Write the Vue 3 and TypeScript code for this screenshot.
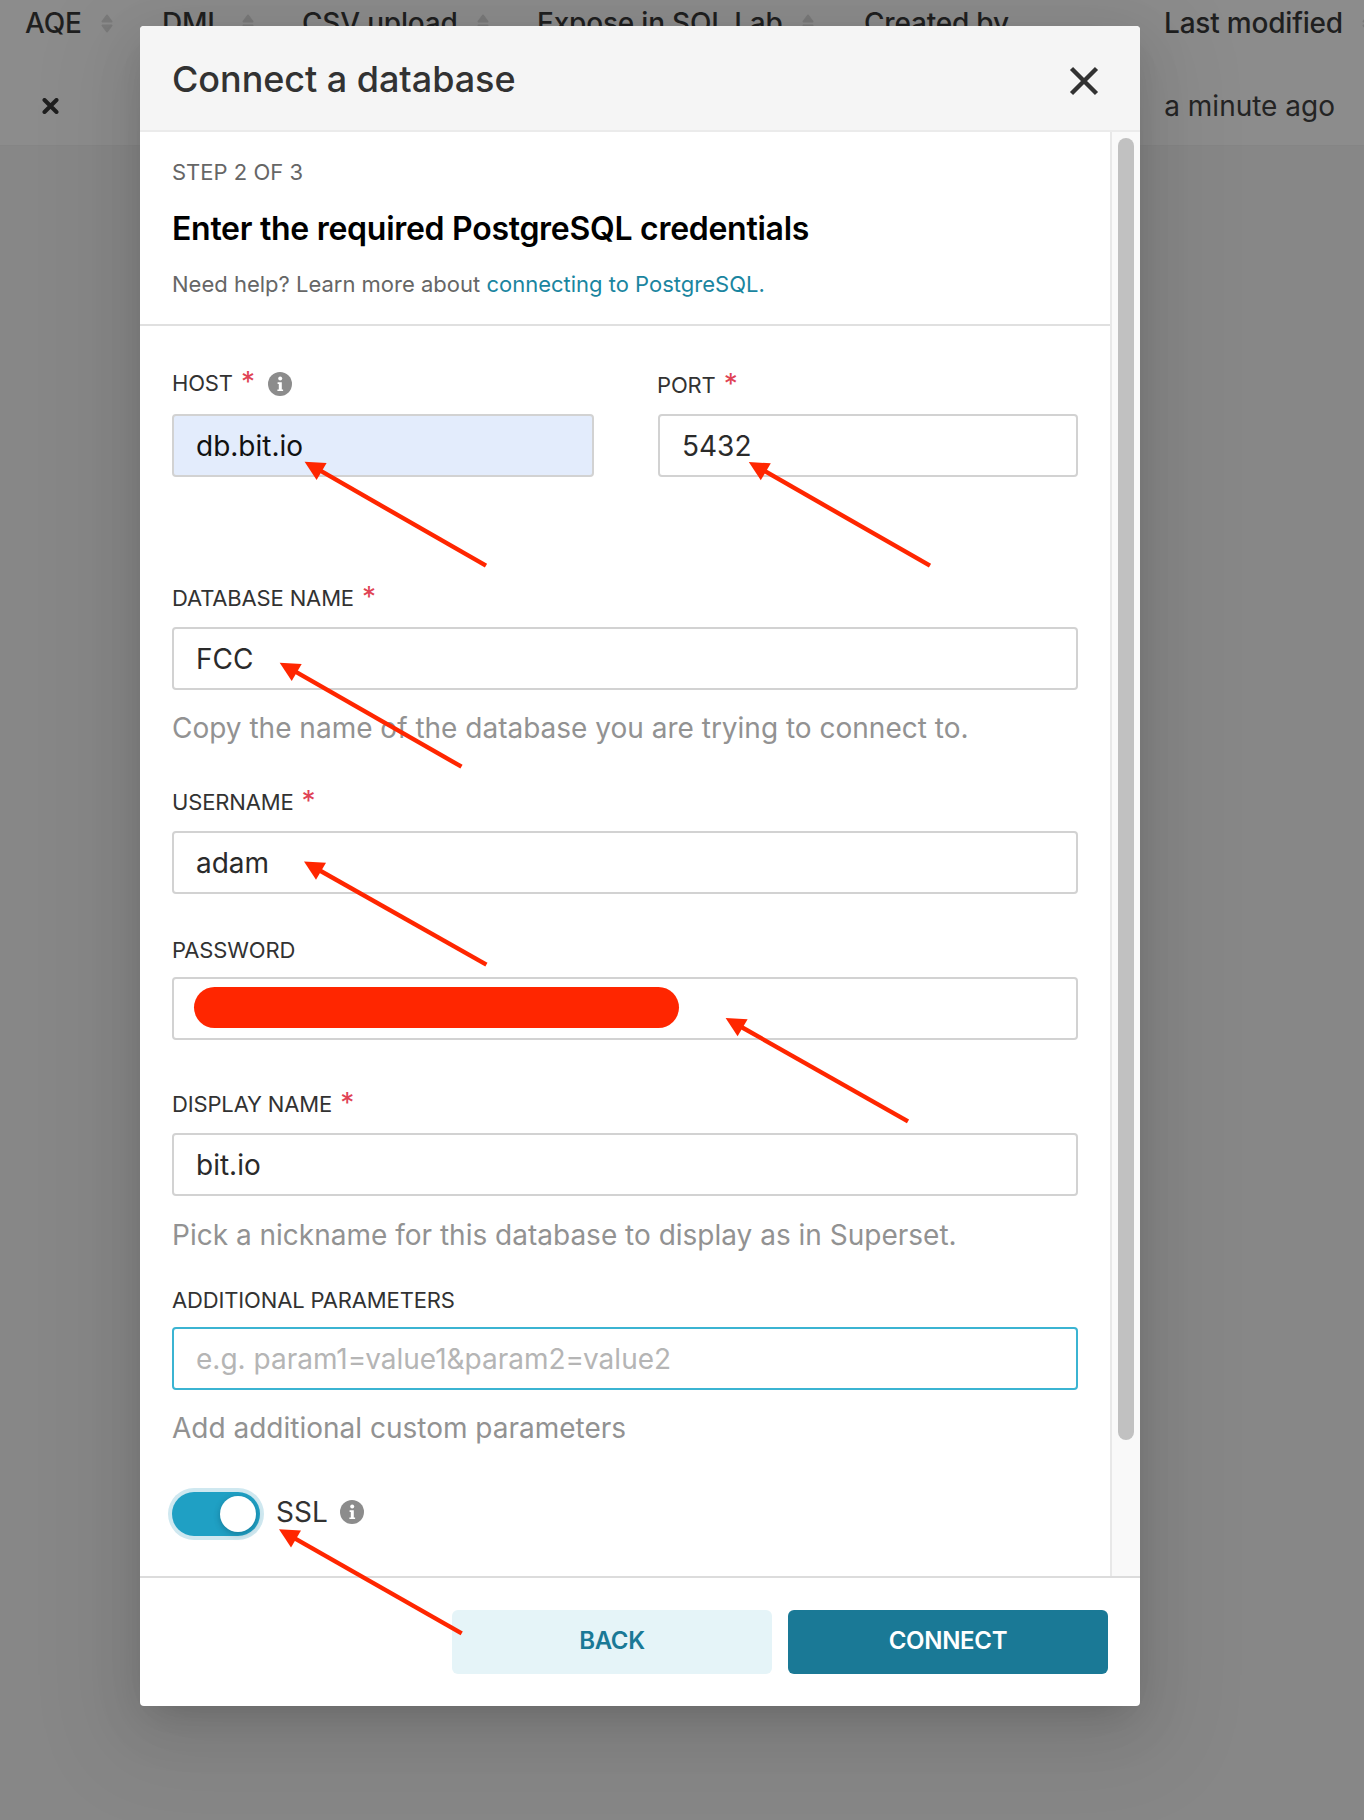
<script setup lang="ts">
interface Arrow { tx: number; ty: number; ex: number; ey: number }
const columns = [
  { name: 'AQE', width: 137, sort: true },
  { name: 'DML', width: 140, sort: true },
  { name: 'CSV upload', width: 235, sort: true },
  { name: 'Expose in SQL Lab', width: 327, sort: true },
  { name: 'Created by', width: 300, sort: false },
  { name: 'Last modified', width: 200, sort: true },
]
const arrows: Arrow[] = [
  { tx: 304.6, ty: 461.7, ex: 486, ey: 565.7 },
  { tx: 748.8, ty: 462, ex: 930, ey: 565.7 },
  { tx: 279.7, ty: 662.7, ex: 461.5, ey: 766.7 },
  { tx: 304, ty: 861.5, ex: 486.4, ey: 964.7 },
  { tx: 725.6, ty: 1018, ex: 908, ey: 1121.4 },
  { tx: 279, ty: 1529.3, ex: 461.7, ey: 1633.3 },
]
const head = (a: Arrow) =>
  `${a.tx},${a.ty} ${a.tx + 22},${a.ty + 1.3} ${a.tx + 12},${a.ty + 18.3}`
</script>

<template>
  <div class="page">
    <div class="table-head">
      <div v-for="c in columns" :key="c.name" class="th" :style="{ width: c.width + 'px' }">
        <span>{{ c.name }}</span>
        <svg v-if="c.sort" class="sort" width="12" height="19" viewBox="0 0 12 19">
          <path d="M6 1.5 L10.5 7.5 H1.5 Z" fill="#7a7a7a" stroke="#7a7a7a" stroke-width="2" stroke-linejoin="round" />
          <path d="M6 17.5 L10.5 11.5 H1.5 Z" fill="#7a7a7a" stroke="#7a7a7a" stroke-width="2" stroke-linejoin="round" />
        </svg>
      </div>
    </div>
    <div class="table-row">
      <svg class="row-x" width="17" height="16" viewBox="0 0 17 16">
        <path d="M2.5 2 L14.5 14 M14.5 2 L2.5 14" stroke="#1f1f1f" stroke-width="4" stroke-linecap="round" fill="none" />
      </svg>
      <span class="row-time">a minute ago</span>
    </div>

    <section class="modal">
      <header class="modal-head">
        <h1>Connect a database</h1>
        <svg class="close" width="30" height="30" viewBox="0 0 30 30">
          <path d="M2.5 2.5 L27.5 27.5 M27.5 2.5 L2.5 27.5" stroke="#323232" stroke-width="4.4" fill="none" />
        </svg>
      </header>
      <div class="modal-main">
        <div class="content">
          <div class="intro">
            <div class="step">STEP 2 OF 3</div>
            <h2>Enter the required PostgreSQL credentials</h2>
            <p class="help">Need help? Learn more about <a>connecting to PostgreSQL.</a></p>
          </div>
          <div class="form">
            <div class="host-row">
              <div class="col-host">
                <label class="lab lab-host">HOST<i>*</i>
                  <svg class="info" width="24" height="24" viewBox="0 0 24 24">
                    <circle cx="12" cy="12" r="12" fill="#8c8c8c" />
                    <circle cx="12.2" cy="6.6" r="2" fill="#fff" />
                    <path d="M9.6 10.2h4.2v7.2h1.3v1.7H9.4v-1.7h1.4v-5.5H9.6z" fill="#fff" />
                  </svg>
                </label>
                <input class="inp autofill" readonly value="db.bit.io" />
              </div>
              <div class="col-port">
                <label class="lab lab-host port-lab">PORT<i>*</i></label>
                <input class="inp" readonly value="5432" />
              </div>
            </div>

            <div class="field f-db">
              <label class="lab">DATABASE NAME<i>*</i></label>
              <input class="inp" readonly value="FCC" />
              <p class="hint">Copy the name of the database you are trying to connect to.</p>
            </div>
            <div class="field f-user">
              <label class="lab">USERNAME<i>*</i></label>
              <input class="inp" readonly value="adam" />
            </div>
            <div class="field f-pass">
              <label class="lab lab-tight">PASSWORD</label>
              <div class="pass-wrap">
                <input class="inp" readonly value="" />
                <span class="redact"></span>
              </div>
            </div>
            <div class="field f-name">
              <label class="lab">DISPLAY NAME<i>*</i></label>
              <input class="inp" readonly value="bit.io" />
              <p class="hint hint-name">Pick a nickname for this database to display as in Superset.</p>
            </div>
            <div class="field f-extra">
              <label class="lab lab-tight">ADDITIONAL PARAMETERS</label>
              <input class="inp focus" readonly placeholder="e.g. param1=value1&param2=value2" />
              <p class="hint">Add additional custom parameters</p>
            </div>
            <div class="ssl">
              <span class="toggle"><span class="knob"></span></span>
              <span class="ssl-text">SSL</span>
              <svg class="ssl-info" width="24" height="24" viewBox="0 0 24 24">
                <circle cx="12" cy="12" r="12" fill="#8c8c8c" />
                <circle cx="12.2" cy="6.6" r="2" fill="#fff" />
                <path d="M9.6 10.2h4.2v7.2h1.3v1.7H9.4v-1.7h1.4v-5.5H9.6z" fill="#fff" />
              </svg>
            </div>
          </div>
        </div>
        <div class="track"><div class="thumb"></div></div>
      </div>
      <footer class="modal-foot">
        <button class="btn back">BACK</button>
        <button class="btn connect">CONNECT</button>
      </footer>
    </section>

    <svg class="marks" width="1364" height="1820" viewBox="0 0 1364 1820">
      <g v-for="(a, i) in arrows" :key="i">
        <line :x1="a.ex" :y1="a.ey" :x2="a.tx + 14" :y2="a.ty + 8" stroke="#ff2600" stroke-width="4.4" />
        <polygon :points="head(a)" fill="#ff2600" />
      </g>
    </svg>
  </div>
</template>

<style scoped>
.page {
  position: relative;
  width: 1364px;
  height: 1820px;
  overflow: hidden;
  background: #878787;
  font-family: Inter, "Noto Sans", sans-serif;
  color: #323232;
}
.table-head {
  display: flex;
  height: 46px;
  padding-left: 25px;
  background: #8c8c8c;
}
.th {
  flex: none;
  display: flex;
  align-items: center;
  gap: 19px;
  font-size: 28px;
  font-weight: 500;
  letter-spacing: -0.2px;
  color: #1f1f1f;
  white-space: nowrap;
}
.sort { flex: none; }
.table-row {
  display: flex;
  align-items: center;
  justify-content: space-between;
  height: 100px;
  padding: 20px 29px 0 42px;
  box-sizing: border-box;
  background: #8c8c8c;
  border-bottom: 1px solid #858585;
}
.row-time { font-size: 28px; color: #242424; }

.modal {
  position: absolute;
  left: 140px;
  top: 26px;
  width: 1000px;
  height: 1680px;
  display: flex;
  flex-direction: column;
  background: #fff;
  border-radius: 4px;
  box-shadow: 0 12px 32px -16px rgba(0, 0, 0, 0.16), 0 18px 56px rgba(0, 0, 0, 0.1), 0 24px 96px 32px rgba(0, 0, 0, 0.06);
}
.modal-head {
  flex: none;
  height: 106px;
  box-sizing: border-box;
  display: flex;
  align-items: center;
  justify-content: space-between;
  padding: 0 41px 0 32px;
  background: #f5f5f5;
  border-bottom: 2px solid #ebebeb;
  border-radius: 4px 4px 0 0;
}
h1 {
  margin: 2px 0 0;
  font-size: 36px;
  font-weight: 500;
  letter-spacing: -0.05px;
  color: #323232;
}
.close { margin-top: 6px; }

.modal-main {
  flex: 1;
  min-height: 0;
  display: flex;
}
.content {
  flex: 1;
  min-width: 0;
}
.intro {
  height: 194px;
  box-sizing: border-box;
  padding: 24px 32px 0;
  border-bottom: 2px solid #e0e0e0;
}
.step {
  font-size: 22px;
  line-height: 32px;
  color: #666;
}
h2 {
  margin: 20px 0 0;
  font-size: 32px;
  line-height: 42px;
  font-weight: 600;
  letter-spacing: -0.28px;
  color: #000;
}
.help {
  margin: 18px 0 0;
  font-size: 22px;
  line-height: 32px;
  color: #666;
}
.help a { color: #1a85a0; }

.form { padding: 42px 32px 0; }
.host-row { display: flex; gap: 64px; }
.col-host { width: 422px; }
.col-port { width: 420px; }
.lab {
  display: flex;
  align-items: center;
  height: 30px;
  margin-bottom: 14px;
  font-size: 22px;
  letter-spacing: -0.15px;
  color: #323232;
}
.lab-host { margin-bottom: 16px; }
.lab i {
  font-style: normal;
  color: #e04355;
  font-size: 28px;
  line-height: 20px;
  margin: 4px 0 0 8px;
  align-self: flex-start;
}
.port-lab { position: relative; top: 2px; left: -1px; }
.info { margin: 1px 0 0 13px; }
.inp {
  display: block;
  width: 100%;
  height: 63px;
  box-sizing: border-box;
  padding: 0 22px;
  border: 2px solid #d2d2d2;
  border-radius: 4px;
  background: #fff;
  font: 28px Inter, "Noto Sans", sans-serif;
  color: #2a2a2a;
  outline: none;
}
.inp.autofill { background: #e3ecfc; color: #111; }
.inp.focus { border-color: #3bb4d2; }
.inp::placeholder { color: #b5b5b5; }
.field { width: 906px; }
.f-db { margin-top: 106px; }
.f-user { margin-top: 39px; }
.f-pass { margin-top: 41px; }
.f-name { margin-top: 49px; }
.f-extra { margin-top: 30px; }
.lab-tight { margin-bottom: 12px; }
.hint {
  margin: 18px 0 0;
  font-size: 28px;
  line-height: 40px;
  color: #929292;
}
.hint-name { margin-top: 19px; }
.pass-wrap { position: relative; }
.redact {
  position: absolute;
  left: 22px;
  top: 10px;
  width: 485px;
  height: 41px;
  border-radius: 21px;
  background: #ff2600;
}
.ssl {
  display: flex;
  align-items: center;
  height: 44px;
  margin-top: 44px;
}
.toggle {
  width: 88px;
  height: 44px;
  border-radius: 22px;
  background: #1fa0c4;
  box-shadow: 0 0 0 4px #cfe8f0;
  display: flex;
  align-items: center;
  justify-content: flex-end;
  padding-right: 4px;
  box-sizing: border-box;
}
.knob {
  width: 36px;
  height: 36px;
  border-radius: 50%;
  background: #fff;
  box-shadow: 0 2px 6px rgba(0, 40, 60, 0.3);
}
.ssl-text { margin: -4px 0 0 16px; font-size: 28px; color: #323232; }
.ssl-info { margin-left: 12px; margin-top: -4px; }

.track {
  flex: none;
  width: 30px;
  box-sizing: border-box;
  background: #f9f9f9;
  border-left: 2px solid #e8e8e8;
  padding: 6px 6px 0;
}
.thumb {
  width: 16px;
  height: 1302px;
  border-radius: 8px;
  background: #c1c1c1;
}
.modal-foot {
  flex: none;
  height: 130px;
  box-sizing: border-box;
  border-top: 2px solid #dcdcdc;
  padding: 32px 32px 0 0;
  display: flex;
  justify-content: flex-end;
  gap: 16px;
}
.btn {
  width: 320px;
  height: 64px;
  border: none;
  border-radius: 6px;
  padding: 0 0 4px;
  font: 600 24px Inter, "Noto Sans", sans-serif;
  letter-spacing: -0.3px;
}
.back { background: #e5f4f8; color: #1a7996; }
.connect { background: #1a7996; color: #fff; }
.marks {
  position: absolute;
  left: 0;
  top: 0;
  pointer-events: none;
}
</style>
